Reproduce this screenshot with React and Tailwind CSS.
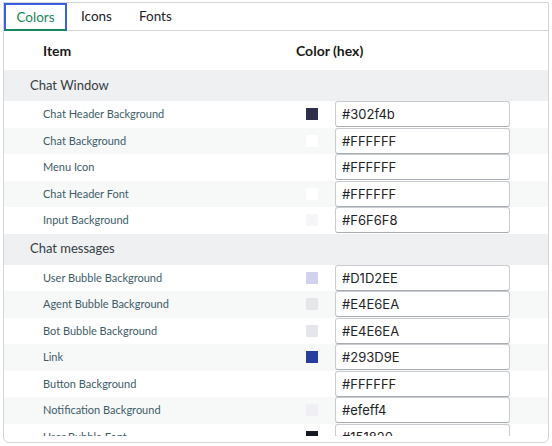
import React from 'react';

const sections = [
  {
    title: 'Chat Window',
    rows: [
      ['Chat Header Background', '#302f4b', '#302f4b'],
      ['Chat Background', '#FFFFFF', '#FFFFFF'],
      ['Menu Icon', '#FFFFFF', null],
      ['Chat Header Font', '#FFFFFF', '#FFFFFF'],
      ['Input Background', '#F6F6F8', '#F6F6F8'],
    ],
  },
  {
    title: 'Chat messages',
    rows: [
      ['User Bubble Background', '#D1D2EE', '#D1D2EE'],
      ['Agent Bubble Background', '#E4E6EA', '#E4E6EA'],
      ['Bot Bubble Background', '#E4E6EA', '#E4E6EA'],
      ['Link', '#293D9E', '#293D9E'],
      ['Button Background', '#FFFFFF', null],
      ['Notification Background', '#efeff4', '#efeff4'],
      ['User Bubble Font', '#151820', '#151820'],
    ],
  },
];

function ColorRow({ label, value, swatch, striped }) {
  return (
    <div className={`flex items-center h-[26.5px] ${striped ? 'bg-[#f7f8f8]' : 'bg-white'}`}>
      <div className="w-[292px] pl-[39px] text-[11px] text-[#3d5c68]">{label}</div>
      <div className="flex items-center">
        <div className="ml-[10px] w-[12px] h-[12px]" style={{ backgroundColor: swatch || 'transparent' }}></div>
        <input
          readOnly
          value={value}
          className="ml-[17px] w-[175px] h-[26px] px-[6px] border border-[#c8cbcf] border-b-[#a9adb2] rounded-[3px] bg-white text-[13px] text-[#1f2326] font-['Inter',sans-serif] outline-none"
        />
      </div>
    </div>
  );
}

export default function App() {
  return (
    <div className="w-[552px] h-[446px] bg-white font-['Lato',sans-serif] pt-[2px] pl-[3px]">
      <div className="w-[546px] h-[441px] border border-[#d3d6d9] rounded-b-[6px] flex flex-col overflow-hidden">
        <div className="h-[28px] flex items-stretch border-b border-[#d3d6d9] text-[13.5px] text-[#222]">
          <button className="w-[63px] mb-[-1px] flex items-center justify-center text-[#17865c] border-2 border-[#3b5fe0] border-b-[#17865c]">
            Colors
          </button>
          <button className="px-[14px] flex items-center">Icons</button>
          <button className="px-[13px] flex items-center">Fonts</button>
        </div>
        <div className="flex-1 overflow-hidden mb-[6px]">
          <div className="flex items-center h-[39px] bg-white text-[14px] font-bold text-[#1a1a1a]">
            <div className="w-[292px] pl-[39px]">Item</div>
            <div>Color (hex)</div>
          </div>
          {sections.map((s) => (
            <div key={s.title}>
              <div className="h-[31px] flex items-center pl-[26px] bg-[#eef0f2] text-[13px] text-[#363d44]">{s.title}</div>
              {s.rows.map(([label, value, swatch], i) => (
                <ColorRow key={label} label={label} value={value} swatch={swatch} striped={i % 2 === 1} />
              ))}
            </div>
          ))}
        </div>
      </div>
    </div>
  );
}
